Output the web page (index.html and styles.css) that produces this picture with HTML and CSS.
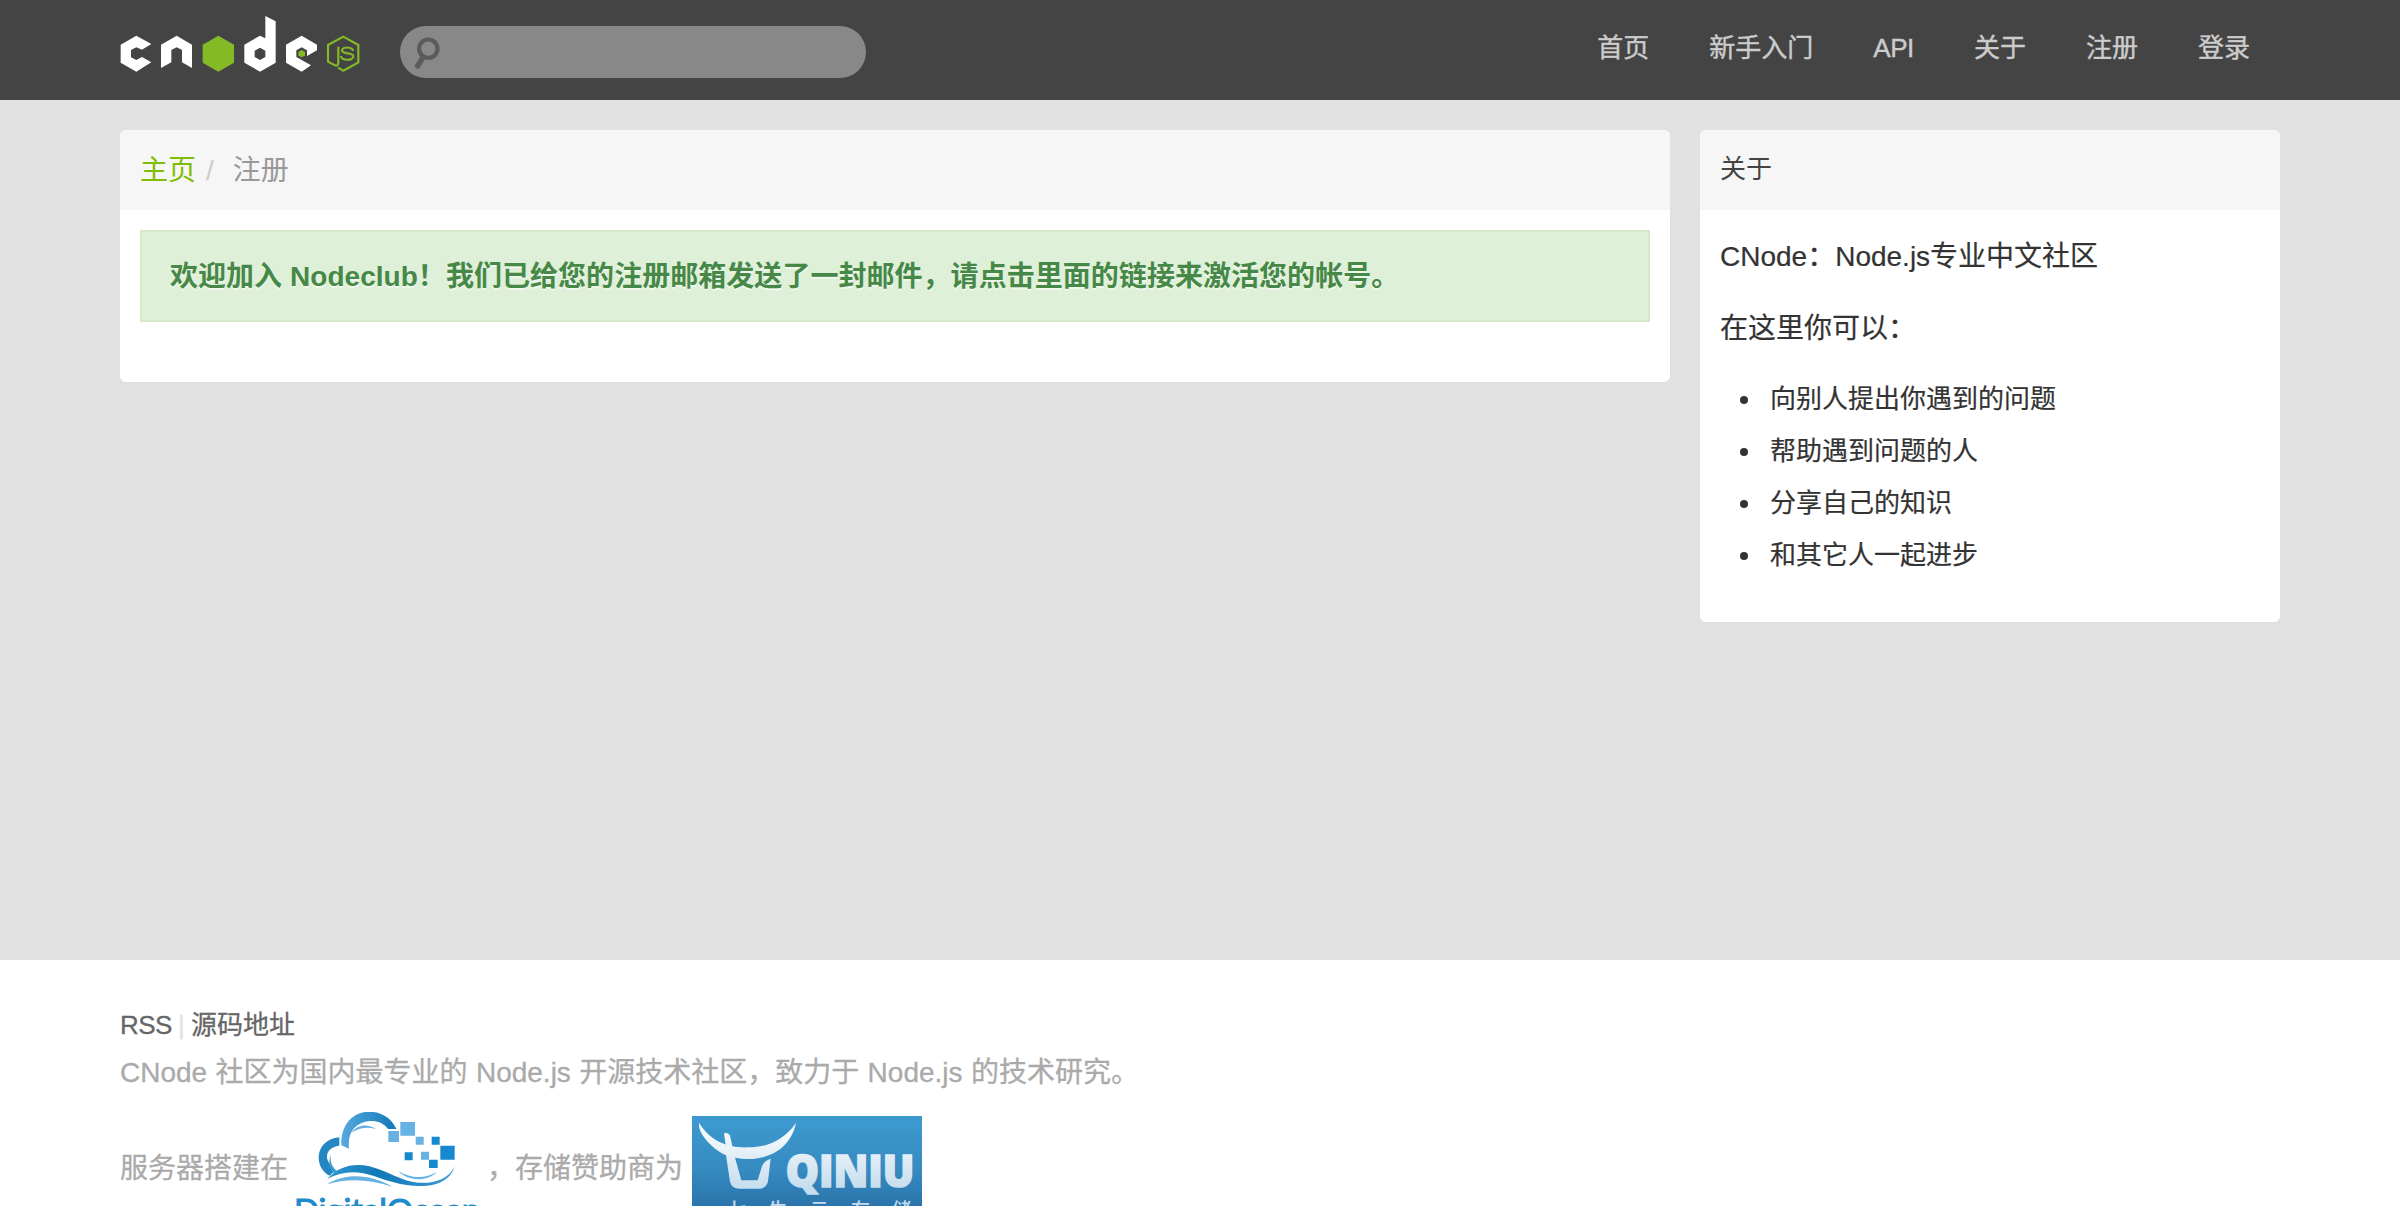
FILE: index.html
```html
<!DOCTYPE html>
<html lang="zh-CN">
<head>
<meta charset="utf-8">
<title>CNode：Node.js专业中文社区</title>
<link rel="stylesheet" href="styles.css">
</head>
<body>
<header class="navbar">
  <div class="container navbar-inner">
    <a class="brand" aria-label="cnode">
      <svg width="240" height="58" viewBox="60 45 720 174">
        <g fill="#fff" fill-rule="evenodd">
          <path d="M109 107L154 132L126 149L109 142L93 150V172L109 180L126 171L154 187L109 215L62 188V134Z"/>
          <path d="M183 134L230 107L276 134V204L246 187V150L230 142L214 150V187L183 204Z"/>
          <path d="M496 48L527 64V188L480 215L433 188V134L480 107L496 115ZM480 143L464 152V171L480 180L496 171V152Z"/>
          <path d="M605 107L651 134V151L621 168V151L605 142L589 151V171L605 180L633 196L605 215L558 188V134Z"/>
        </g>
        <g fill="#83ba25">
          <path d="M355 107L402 134V188L355 215L308 188V134Z"/>
          <path d="M605 150L615 156V167L605 172L595 167V156Z"/>
        </g>
        <g fill="none" stroke="#83ba25" stroke-width="6.5">
          <path d="M715 140V187C715 199 708 198 701 194L684 185V135L730 110L775 135V187L730 212L714 203"/>
          <path d="M759 153C758 140 726 139 726 151C726 165 760 155 760 169C760 184 724 182 723 168"/>
        </g>
      </svg>
    </a>
    <form class="search">
      <svg class="search-icon" width="32" height="40" viewBox="0 0 32 40">
        <g fill="none" stroke="#5b5b5b">
          <circle cx="16.3" cy="16.7" r="9.2" stroke-width="4.2"/>
          <path d="M10.6 26L5.6 34" stroke-width="5.4" stroke-linecap="round"/>
        </g>
      </svg>
    </form>
    <nav class="nav">
      <a>首页</a><a>新手入门</a><a>API</a><a>关于</a><a>注册</a><a>登录</a>
    </nav>
  </div>
</header>

<main class="container main">
  <section class="panel content">
    <div class="panel-header breadcrumb"><a>主页</a><span class="divider">/</span><span>注册</span></div>
    <div class="panel-body">
      <div class="alert"><strong>欢迎加入 Nodeclub！我们已给您的注册邮箱发送了一封邮件，请点击里面的链接来激活您的帐号。</strong></div>
    </div>
  </section>
  <aside class="panel sidebar">
    <div class="panel-header">关于</div>
    <div class="about">
      <p>CNode：Node.js专业中文社区</p>
      <p>在这里你可以：</p>
      <ul>
        <li>向别人提出你遇到的问题</li>
        <li>帮助遇到问题的人</li>
        <li>分享自己的知识</li>
        <li>和其它人一起进步</li>
      </ul>
    </div>
  </aside>
</main>

<footer class="footer">
  <div class="container">
    <div class="links"><a>RSS</a><span class="bar">|</span><a>源码地址</a></div>
    <div class="intro">CNode 社区为国内最专业的 Node.js 开源技术社区，致力于 Node.js 的技术研究。</div>
    <div class="sponsors">
      <span>服务器搭建在</span>
      <svg class="ocean" width="184" height="130" viewBox="48 48 552 390">
        <defs>
          <linearGradient id="arc" x1="0" x2="1"><stop offset="0" stop-color="#58a9de"/><stop offset="1" stop-color="#1079b8"/></linearGradient>
          <linearGradient id="wave" x1="0" x2="1"><stop offset="0" stop-color="#2f96d0"/><stop offset=".4" stop-color="#1079b8"/><stop offset="1" stop-color="#3b9bd3"/></linearGradient>
        </defs>
        <path fill="url(#arc)" d="M184 148C182 90 214 48 268 47C310 48 338 72 349 99H324C310 80 292 74 268 75C228 79 201 108 207 158Z"/>
        <path fill="#5fafe0" d="M215 110C232 84 264 83 288 99C260 92 238 95 215 110Z"/>
        <path fill="#2587c2" d="M178 124C137 128 115 155 116 187C117 212 131 231 149 239L166 222C144 202 138 187 142 174C146 160 159 151 178 149Z"/>
        <path fill="#3b9bd3" d="M152 177C150 201 157 213 171 225L161 231C147 216 145 194 152 177Z"/>
        <path fill="url(#wave)" d="M142 249C174 211 221 200 268 211C322 224 365 257 414 260C463 263 503 250 524 212C512 251 472 270 421 270C362 270 320 253 282 240C232 223 186 224 142 249Z"/>
        <path fill="#66b2e2" d="M141 265C199 228 276 236 337 272C272 251 207 245 141 265Z"/>
        <path fill="#66b2e2" d="M355 225C394 249 437 248 469 228C449 256 384 258 355 225Z"/>
        <path fill="#66b2e2" d="M325 105h32v33h-32zM361 78h44v41h-44zM407 122h24v24h-24zM423 167h24v24h-24z"/>
        <path fill="#1688cf" d="M455 122h24v24h-24zM374 169h24v24h-24zM481 149h43v42h-43zM447 191h26v25h-26z"/>
        <text x="42" y="374" textLength="558" lengthAdjust="spacingAndGlyphs">DigitalOcean</text>
      </svg>
      <span>，存储赞助商为</span>
      <svg class="qiniu" width="230" height="126" viewBox="36 30 690 378">
        <defs>
          <linearGradient id="sky" x1="0" y1="0" x2="0" y2="1"><stop offset="0" stop-color="#3d9ad0"/><stop offset=".42" stop-color="#368bc1"/><stop offset=".7" stop-color="#2a75ac"/><stop offset="1" stop-color="#256a9f"/></linearGradient>
          <linearGradient id="ice" gradientUnits="userSpaceOnUse" x1="0" y1="50" x2="0" y2="250"><stop offset="0" stop-color="#fff"/><stop offset="1" stop-color="#c5ddee"/></linearGradient>
        </defs>
        <path fill="url(#sky)" d="M36 30h690v378H36z"/>
        <g fill="url(#ice)">
          <path d="M57 51C94 108 146 126 204 124C266 123 310 103 348 51C335 112 288 158 204 159Q184 159 165 155L184 223H233L246 181Q252 164 272 158L264 226Q259 248 236 248H178Q155 248 150 227L138 148C102 133 53 86 57 51Z"/>
          <path d="M132 82Q147 78 151 93L159 130L139 130Z"/>
          <text class="qiniu-name" x="317" y="242" textLength="386" lengthAdjust="spacingAndGlyphs">QINIU</text>
          <text class="qiniu-sub" x="141" y="334" letter-spacing="67">七牛云存储</text>
        </g>
      </svg>
    </div>
  </div>
</footer>
</body>
</html>
```
FILE: styles.css
```css
* { box-sizing: border-box; }
body {
  margin: 0;
  height: 1206px;
  overflow: hidden;
  display: flex;
  flex-direction: column;
  background: #e1e1e1;
  color: #333;
  font: 28px/40px "Liberation Sans", "Noto Sans CJK SC", sans-serif;
}
.container { width: 2160px; margin: 0 auto; }

.navbar { height: 100px; background: #444; }
.navbar-inner { display: flex; }
.brand { height: 58px; margin-top: 15px; }
.brand svg { display: block; }
.search {
  width: 466px;
  height: 52px;
  margin: 26px 0 0 40px;
  border-radius: 26px;
  background: #888;
}
.search-icon { display: block; margin: 6px 0 0 12px; filter: blur(.7px); }
.nav { display: flex; margin-left: auto; }
.nav a { padding: 28px 30px 0; color: #ccc; font-size: 26px; -webkit-text-stroke: .4px; }
.nav a:nth-child(3) { letter-spacing: -.4px; }

.main { display: flex; align-items: flex-start; gap: 30px; height: 860px; padding-top: 30px; }
.panel { border-radius: 6px; background: #fff; overflow: hidden; }
.content { width: 1550px; height: 252px; }
.sidebar { width: 580px; height: 492px; }
.panel-header { height: 80px; padding: 20px; background: #f6f6f6; color: #444; font-size: 26px; line-height: 38px; }
.breadcrumb { padding-top: 21px; color: #999; font-size: 28px; line-height: 40px; }
.breadcrumb a { color: #80bd01; }
.divider { padding: 0 19px 0 10px; color: #ccc; }
.panel-body { padding: 20px; }
.alert {
  height: 92px;
  padding: 25px 28px;
  border: 2px solid #d6e9c6;
  background: #dff0d8;
  color: #468847;
  text-shadow: 0 2px 0 rgba(255, 255, 255, .5);
}
.alert strong { letter-spacing: .04px; }

.about { padding: 27px 20px; -webkit-text-stroke: .2px; }
.about p { margin: 0 0 32px; }
.about ul { margin: -8px 0 0; padding: 0 0 0 20px; font-size: 26px; line-height: 52px; list-style: none; }
.about li { display: flex; align-items: center; gap: 22px; }
.about li::before { content: ""; width: 8px; height: 8px; margin-top: 1px; border-radius: 50%; background: #333; }

.footer { height: 246px; padding-top: 45px; background: #fff; overflow: hidden; -webkit-text-stroke: .3px; }
.links { display: flex; color: #666; font-size: 26px; }
.links a:first-child { width: 52px; letter-spacing: -.5px; }
.bar { width: 19px; text-align: center; color: #e1e1e1; }
.intro { margin-top: 8px; color: #aaa; word-spacing: .6px; }
.sponsors { display: flex; align-items: flex-start; margin-top: 19px; color: #aaa; }
.sponsors span { margin-top: 37px; }
.ocean { margin: 0 7px 0 8px; }
.ocean text { font: 92px "Lato", sans-serif; fill: #1d8bcb; stroke: #1d8bcb; stroke-width: 3; }
.qiniu { margin: 4px 0 0 9px; }
.qiniu-name { font: 800 132px "Open Sans", sans-serif; stroke: url(#ice); stroke-width: 5; }
.qiniu-sub { font: 500 57px "Noto Sans CJK SC", sans-serif; }
```
